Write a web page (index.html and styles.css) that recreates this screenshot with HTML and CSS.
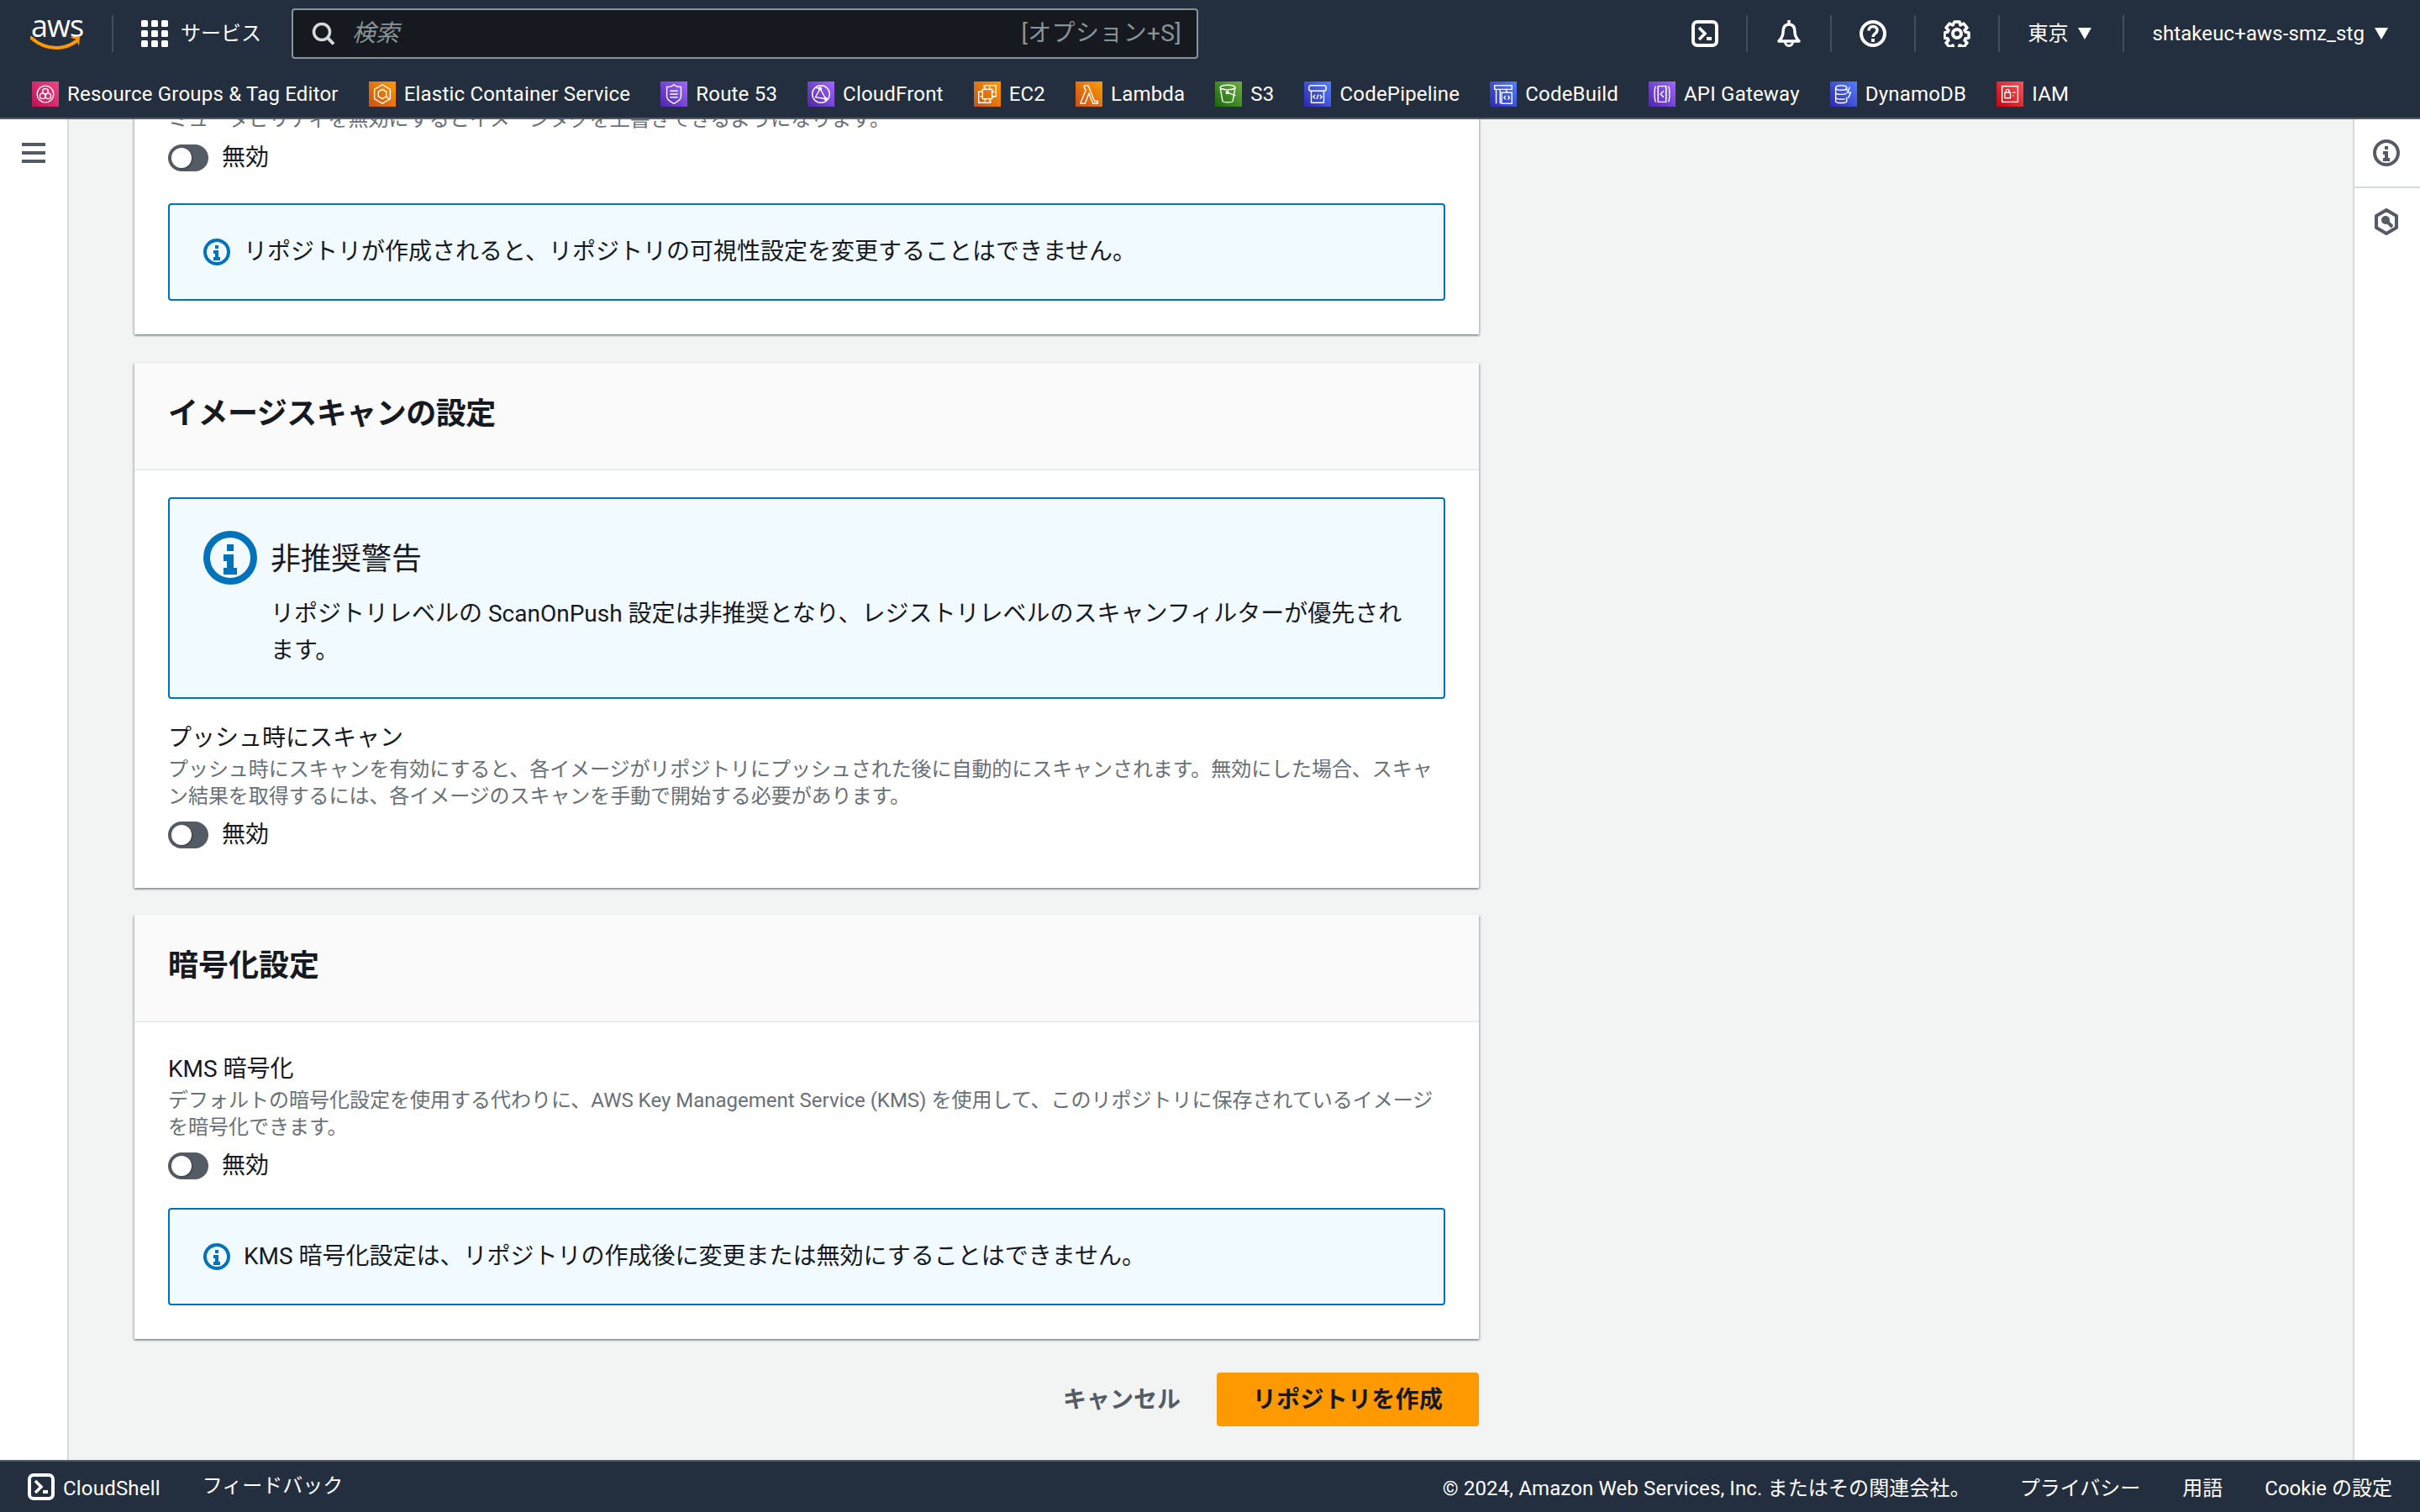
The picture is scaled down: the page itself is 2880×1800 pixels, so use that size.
FILE: index.html
```html
<!DOCTYPE html>
<html lang="ja">
<head>
<meta charset="utf-8">
<title>リポジトリを作成</title>
<link rel="stylesheet" href="styles.css">
</head>
<body>
<div class="app">
  <header class="nav">
    <div class="nav-top">
      <div class="logo">
        <span class="logo-text">aws</span>
        <svg class="logo-smile" viewBox="0 0 62 18"><path d="M1 3c9 8 19 12 30 12 9 0 17-3 24-8" fill="none" stroke="#f90" stroke-width="4" stroke-linecap="round"/><path d="M47 2.500l12-1.500-1 12-3-8z" fill="#f90"/></svg>
      </div>
      <span class="nav-sep"></span>
      <svg class="ico grid-ico" viewBox="0 0 32 32"><g fill="#fff"><rect x="0" y="0" width="8" height="8" rx="1.500"/><rect x="12" y="0" width="8" height="8" rx="1.500"/><rect x="24" y="0" width="8" height="8" rx="1.500"/><rect x="0" y="12" width="8" height="8" rx="1.500"/><rect x="12" y="12" width="8" height="8" rx="1.500"/><rect x="24" y="12" width="8" height="8" rx="1.500"/><rect x="0" y="24" width="8" height="8" rx="1.500"/><rect x="12" y="24" width="8" height="8" rx="1.500"/><rect x="24" y="24" width="8" height="8" rx="1.500"/></g></svg>
      <span class="services">サービス</span>
      <div class="search">
        <svg class="search-ico" viewBox="0 0 28 28"><circle cx="12" cy="12" r="9.500" fill="none" stroke="#d5dbdb" stroke-width="3.500"/><path d="M19 19l7 7.500" stroke="#d5dbdb" stroke-width="4" fill="none"/></svg>
        <span class="search-ph">検索</span>
        <span class="search-key">[オプション+S]</span>
      </div>
      <div class="nav-right">
        <div class="nav-item">
          <svg class="ico" viewBox="0 0 32 32"><rect x="2" y="2" width="28" height="28" rx="5" fill="none" stroke="#fff" stroke-width="4"/><path d="M9 9l7 7-7 7" fill="none" stroke="#fff" stroke-width="3.500"/><path d="M18 22h6" stroke="#fff" stroke-width="4"/></svg>
        </div>
        <div class="nav-item">
          <svg class="ico" viewBox="0 0 32 32"><path d="M16 0v5" stroke="#fff" stroke-width="3.500"/><path d="M16 5c-5 0-7 4-7 9 0 5-2 8-5 11h24c-3-3-5-6-5-11 0-5-2-9-7-9z" fill="none" stroke="#fff" stroke-width="3.500" stroke-linejoin="round"/><path d="M11.500 26a4.500 4.500 0 0 0 9 0" fill="none" stroke="#fff" stroke-width="3"/></svg>
        </div>
        <div class="nav-item">
          <svg class="ico" viewBox="0 0 32 32"><circle cx="16" cy="16" r="14" fill="none" stroke="#fff" stroke-width="4"/><path d="M11 12.500c0-3 2-5 5-5s5 2 5 4.500c0 4-5 4-5 8" fill="none" stroke="#fff" stroke-width="3.500"/><rect x="14" y="22" width="4" height="4" fill="#fff"/></svg>
        </div>
        <div class="nav-item">
          <svg class="ico" viewBox="0 0 32 32"><path d="M13 2h6l1 4 4-2 4 5-3 3 1 2 4 1v6l-4 1-1 2 3 3-4 5-4-2-1 0-1 4h-6l-1-4-4 2-4-5 3-3-1-2-4-1v-6l4-1 1-2-3-3 4-5 4 2z" fill="none" stroke="#fff" stroke-width="3.500" stroke-linejoin="round"/><circle cx="16" cy="16" r="5" fill="none" stroke="#fff" stroke-width="4"/></svg>
        </div>
        <div class="nav-item nav-text nav-region">東京<span class="caret"></span></div>
        <div class="nav-item nav-text nav-last">shtakeuc+aws-smz_stg<span class="caret"></span></div>
      </div>
    </div>
    <nav class="bookmarks">
      <a class="bm"><span class="svc svc-pink"><svg viewBox="0 0 32 32"><g fill="none" stroke="#fff" stroke-width="1.500"><circle cx="16" cy="16" r="10.500"/><circle cx="16" cy="12.500" r="3.500"/><circle cx="12.500" cy="18.500" r="3.500"/><circle cx="19.500" cy="18.500" r="3.500"/></g></svg></span>Resource Groups &amp; Tag Editor</a>
      <a class="bm"><span class="svc svc-orange"><svg viewBox="0 0 32 32"><g fill="none" stroke="#fff" stroke-width="1.500"><path d="M16 4l10 6v12l-10 6-10-6V10z"/><path d="M16 10l5 3v6l-5 3-5-3v-6zM21 19l4 4"/></g></svg></span>Elastic Container Service</a>
      <a class="bm"><span class="svc svc-purple"><svg viewBox="0 0 32 32"><g fill="none" stroke="#fff" stroke-width="1.500"><path d="M16 4c3 3 6 3 9 3v12c0 5-5 7-9 9-4-2-9-4-9-9V7c3 0 6 0 9-3z"/><path d="M11 12h10M11 16h10M11 20h10"/></g></svg></span>Route 53</a>
      <a class="bm"><span class="svc svc-purple"><svg viewBox="0 0 32 32"><g fill="none" stroke="#fff" stroke-width="1.500"><circle cx="16" cy="16" r="11"/><path d="M9 20l6-11 7 13zM9 20l13 2M15 9l-5-1"/><circle cx="15" cy="9" r="1.500" fill="#fff"/><circle cx="22" cy="22" r="1.500" fill="#fff"/></g></svg></span>CloudFront</a>
      <a class="bm"><span class="svc svc-orange"><svg viewBox="0 0 32 32"><g fill="none" stroke="#fff" stroke-width="1.500"><path d="M12 8V5h15v14h-4M20 24v3H5V13h4"/><rect x="10" y="10" width="12" height="12"/><path d="M13 7v3M19 7v3M13 22v3M19 22v3M7 13h3M7 19h3M22 13h3M22 19h3"/></g></svg></span>EC2</a>
      <a class="bm"><span class="svc svc-orange"><svg viewBox="0 0 32 32"><path d="M10 5h5l8 20h4v3h-6l-5-13-5 13H5l7-17-2-3z" fill="none" stroke="#fff" stroke-width="1.500" stroke-linejoin="round"/></svg></span>Lambda</a>
      <a class="bm"><span class="svc svc-green"><svg viewBox="0 0 32 32"><g fill="none" stroke="#fff" stroke-width="1.500"><ellipse cx="15" cy="7.500" rx="9.500" ry="3"/><path d="M5.500 8l3 17c.5 2 12.500 2 13 0l3-17"/><path d="M15 14l10 4"/><circle cx="14.500" cy="14" r="1.500" fill="#fff"/></g></svg></span>S3</a>
      <a class="bm"><span class="svc svc-blue"><svg viewBox="0 0 32 32"><g fill="none" stroke="#fff" stroke-width="1.500"><rect x="5" y="5" width="22" height="7" rx="3"/><path d="M8 12v15h16V12"/><path d="M13 17l-2.500 2.500L13 22M19 17l2.500 2.500L19 22M17 16.500l-2 6"/></g></svg></span>CodePipeline</a>
      <a class="bm"><span class="svc svc-blue"><svg viewBox="0 0 32 32"><g fill="none" stroke="#fff" stroke-width="1.500"><path d="M5 5h22v5H5zM7 10v18M12 10v18M20 10v4"/><rect x="14" y="14" width="13" height="14"/><path d="M19 18l-2 2.500 2 2.500M22 18l2 2.500-2 2.500"/></g></svg></span>CodeBuild</a>
      <a class="bm"><span class="svc svc-purple"><svg viewBox="0 0 32 32"><g fill="none" stroke="#fff" stroke-width="1.500"><path d="M8 6c-2 3-2 17 0 20M24 6c2 3 2 17 0 20M11 6h10v20H11z"/><path d="M18 12l-4 4 4 4"/><path d="M11 9h-1M11 13h-1M11 17h-1M11 21h-1M22 9h-1M22 13h-1M22 17h-1M22 21h-1"/></g></svg></span>API Gateway</a>
      <a class="bm"><span class="svc svc-blue"><svg viewBox="0 0 32 32"><g fill="none" stroke="#fff" stroke-width="1.500"><ellipse cx="13" cy="8" rx="7" ry="3"/><path d="M6 8v17c0 3 14 3 14 0v-5M6 14c0 3 10 3 14 1M6 20c0 3 8 3 12 2M20 8v4"/><path d="M24 7l-3 7h4l-3 7"/></g></svg></span>DynamoDB</a>
      <a class="bm"><span class="svc svc-red"><svg viewBox="0 0 32 32"><g fill="none" stroke="#fff" stroke-width="1.500"><rect x="6" y="6" width="20" height="20"/><rect x="9.500" y="14" width="7" height="7"/><path d="M11 14v-2a2 2 0 0 1 4 0v2M19 14h4M19 18h2"/></g></svg></span>IAM</a>
    </nav>
  </header>

  <div class="workspace">
    <aside class="side-left">
      <svg class="menu-ico" viewBox="0 0 28 24"><path d="M0 2h28M0 12h28M0 22h28" stroke="#545b64" stroke-width="4"/></svg>
    </aside>

    <main class="content">
      <section class="card card-scrolled">
        <div class="card-body body-clipped">
          <p class="desc">ミュータビリティを無効にするとイメージタグを上書きできるようになります。</p>
          <div class="toggle-row"><span class="toggle"><span class="knob"></span></span>無効</div>
          <div class="alert alert-first"><svg class="info" viewBox="0 0 16 16"><use href="#i-info"/></svg><span>リポジトリが作成されると、リポジトリの可視性設定を変更することはできません。</span></div>
        </div>
      </section>

      <section class="card">
        <h2 class="card-head head-kana">イメージスキャンの設定</h2>
        <div class="card-body body-scan">
          <div class="alert-big">
            <div class="alert-big-top">
              <svg class="info-big" viewBox="0 0 16 16"><use href="#i-info"/></svg>
              <span class="alert-title">非推奨警告</span>
            </div>
            <p class="alert-big-text">リポジトリレベルの ScanOnPush 設定は非推奨となり、レジストリレベルのスキャンフィルターが優先され<br>ます。</p>
          </div>
          <div class="label label-scan">プッシュ時にスキャン</div>
          <p class="desc desc-under desc-tight">プッシュ時にスキャンを有効にすると、各イメージがリポジトリにプッシュされた後に自動的にスキャンされます。無効にした場合、スキャ<br>ン結果を取得するには、各イメージのスキャンを手動で開始する必要があります。</p>
          <div class="toggle-row"><span class="toggle"><span class="knob"></span></span>無効</div>
        </div>
      </section>

      <section class="card">
        <h2 class="card-head">暗号化設定</h2>
        <div class="card-body body-kms">
          <div class="label">KMS 暗号化</div>
          <p class="desc desc-under">デフォルトの暗号化設定を使用する代わりに、AWS Key Management Service (KMS) を使用して、このリポジトリに保存されているイメージ<br>を暗号化できます。</p>
          <div class="toggle-row"><span class="toggle"><span class="knob"></span></span>無効</div>
          <div class="alert alert-kms"><svg class="info" viewBox="0 0 16 16"><use href="#i-info"/></svg><span>KMS 暗号化設定は、リポジトリの作成後に変更または無効にすることはできません。</span></div>
        </div>
      </section>

      <div class="actions">
        <a class="btn-cancel">キャンセル</a>
        <a class="btn-primary">リポジトリを作成</a>
      </div>
    </main>

    <aside class="side-right">
      <div class="rail-slot rail-first">
        <svg class="ico" viewBox="0 0 16 16"><use href="#i-info-gray"/></svg>
      </div>
      <div class="rail-slot">
        <svg class="ico" viewBox="0 0 32 32"><path d="M16 2l12 7v14l-12 7-12-7V9z" fill="none" stroke="#545b64" stroke-width="4" stroke-linejoin="round"/><circle cx="15" cy="14" r="5" fill="#545b64"/><path d="M17 16l6 6" stroke="#545b64" stroke-width="4"/></svg>
      </div>
    </aside>
  </div>

  <footer class="foot">
    <svg class="ico" viewBox="0 0 32 32"><rect x="2" y="2" width="28" height="28" rx="5" fill="none" stroke="#fff" stroke-width="4"/><path d="M9 9l7 7-7 7" fill="none" stroke="#fff" stroke-width="3.500"/><path d="M18 22h6" stroke="#fff" stroke-width="4"/></svg>
    <span class="foot-shell">CloudShell</span>
    <span class="foot-feedback">フィードバック</span>
    <span class="foot-copy">© 2024, Amazon Web Services, Inc. またはその関連会社。</span>
    <span class="foot-link">プライバシー</span>
    <span class="foot-link">用語</span>
    <span class="foot-link">Cookie の設定</span>
  </footer>
</div>

<svg class="defs" width="0" height="0">
  <defs>
    <g id="i-info"><circle cx="8" cy="8" r="7" fill="none" stroke="#0073bb" stroke-width="2"/><path fill="#0073bb" d="M7 4h2v2H7zM6 7h3v4h1v2H6v-2h1V9H6z"/></g>
    <g id="i-info-gray"><circle cx="8" cy="8" r="7" fill="none" stroke="#545b64" stroke-width="2"/><path fill="#545b64" d="M7 4h2v2H7zM6 7h3v4h1v2H6v-2h1V9H6z"/></g>
  </defs>
</svg>
</body>
</html>
```
FILE: styles.css
```css
* { box-sizing: border-box; }
html, body { margin: 0; padding: 0; height: 100%; }
body {
  font-family: Roboto, "Noto Sans CJK JP", sans-serif;
  font-size: 28px;
  line-height: 40px;
  color: #16191f;
  background: #f2f3f3;
}
.defs { position: absolute; }
.app { display: flex; flex-direction: column; height: 1800px; width: 2880px; overflow: hidden; }
.ico { width: 32px; height: 32px; display: block; flex: none; }

/* top navigation */
.nav { flex: none; height: 142px; background: #232f3e; border-bottom: 2px solid #545b64; color: #fff; }
.nav-top { display: flex; align-items: center; height: 80px; padding-left: 36px; font-size: 24px; }
.logo { position: relative; width: 62px; height: 44px; margin-right: 35px; flex: none; }
.logo-text { position: absolute; left: 1px; top: -7px; font-family: "Open Sans", sans-serif; font-size: 36px; line-height: 40px; letter-spacing: -1px; color: #fff; }
.logo-smile { position: absolute; left: 0; top: 24px; width: 62px; height: 18px; }
.nav-sep { width: 2px; height: 44px; background: #414d5c; margin-right: 33px; flex: none; }
.grid-ico { margin-right: 15px; }
.services { width: 96px; flex: none; margin-right: 36px; white-space: nowrap; }
.search { display: flex; align-items: center; width: 1079px; height: 60px; background: #16191f; border: 2px solid #879596; border-radius: 4px; padding: 0 18px 0 22px; color: #879596; font-size: 28px; flex: none; }
.search-ico { width: 28px; height: 28px; margin-right: 20px; flex: none; }
.search-ph { font-style: italic; }
.search-key { margin-left: auto; letter-spacing: .35px; }
.nav-right { display: flex; align-items: center; margin-left: auto; padding-right: 38px; }
.nav-item { display: flex; align-items: center; height: 44px; padding: 0 33px; border-right: 2px solid #414d5c; white-space: nowrap; }
.nav-text { line-height: 44px; }
.nav-region { padding-right: 37px; }
.nav-last { border-right: 0; padding-right: 0; letter-spacing: .1px; }
.caret { width: 0; height: 0; margin-left: 12px; border-left: 8px solid transparent; border-right: 8px solid transparent; border-top: 14px solid #fff; }
.bookmarks { display: flex; align-items: center; height: 60px; padding: 4px 0 0 38px; gap: 36px; font-size: 24px; letter-spacing: .2px; }
.bm { display: flex; align-items: center; gap: 10px; white-space: nowrap; color: #fff; }
.svc { display: block; width: 32px; height: 30px; flex: none; }
.svc svg { display: block; width: 32px; height: 30px; }
.svc-pink { background: linear-gradient(45deg, #bc1356, #f34482); }
.svc-orange { background: linear-gradient(45deg, #c8511b, #f90); }
.svc-purple { background: linear-gradient(45deg, #4d27a8, #a166ff); }
.svc-green { background: linear-gradient(45deg, #1b660f, #6cae3e); }
.svc-blue { background: linear-gradient(45deg, #2e27ad, #527fff); }
.svc-red { background: linear-gradient(45deg, #bd0816, #ff5252); }

/* workspace */
.workspace { flex: 1; display: flex; min-height: 0; }
.side-left { flex: none; width: 82px; background: #fff; border-right: 2px solid #d5dbdb; padding: 28px 0 0 26px; }
.menu-ico { display: block; width: 28px; height: 24px; }
.content { flex: 1; overflow: hidden; padding: 0 0 0 78px; min-width: 0; }
.side-right { flex: none; width: 80px; background: #fff; border-left: 2px solid #d5dbdb; }
.rail-slot { padding: 24px 0 0 22px; }
.rail-first { height: 82px; border-bottom: 2px solid #d5dbdb; }

/* cards */
.card { width: 1600px; background: #fff; margin-bottom: 32px; box-shadow: 0 -1px 0 #eaeded, 0 2px 2px rgba(0, 28, 36, .3), 2px 1px 2px rgba(0, 28, 36, .15), -2px 1px 2px rgba(0, 28, 36, .15); }
.card-scrolled { margin-top: -16px; margin-bottom: 34px; }
.card-head { margin: 0; height: 128px; padding: 0 40px 4px; display: flex; align-items: center; background: #fafafa; border-bottom: 2px solid #eaeded; font-size: 36px; font-weight: 700; line-height: 48px; }
.head-kana { letter-spacing: -.5px; }
.card-body { padding: 32px 40px 47px; }
.body-clipped { padding: 0 40px 40px; }
.body-kms { padding: 36px 40px 40px; }
.desc { margin: 0; font-size: 24px; line-height: 32px; color: #687078; }
.desc-under { margin-top: 1px; }
.desc-tight { letter-spacing: -.06px; }
.label { line-height: 40px; }
.label-scan { margin-top: 27px; }
.toggle-row { display: flex; align-items: center; gap: 16px; height: 32px; margin-top: 14px; line-height: 32px; }
.toggle { display: block; width: 48px; height: 32px; border-radius: 16px; background: #545b64; padding: 4px; }
.knob { display: block; width: 24px; height: 24px; border-radius: 50%; background: #fff; box-shadow: 1px 1px 2px rgba(0, 0, 0, .35); }

/* alerts */
.alert { display: flex; align-items: center; height: 116px; padding: 0 40px; border: 2px solid #0073bb; border-radius: 4px; background: #f1faff; }
.alert-first { margin-top: 38px; }
.alert-kms { margin-top: 34px; }
.info { width: 32px; height: 32px; margin-right: 16px; flex: none; }
.alert-big { height: 240px; padding: 38px 40px 0; border: 2px solid #0073bb; border-radius: 4px; background: #f1faff; }
.alert-big-top { display: flex; align-items: center; gap: 16px; }
.info-big { width: 64px; height: 64px; flex: none; }
.alert-title { font-size: 36px; line-height: 48px; margin-top: 4px; }
.alert-big-text { margin: 13px 0 0 80px; line-height: 44px; }

/* actions */
.actions { display: flex; align-items: center; justify-content: flex-end; width: 1600px; margin-top: 40px; font-weight: 700; }
.btn-cancel { color: #545b64; margin: 2px 43px 0 0; }
.btn-primary { display: flex; align-items: center; justify-content: center; width: 312px; height: 64px; padding-top: 2px; background: #f90; border-radius: 4px; color: #16191f; letter-spacing: .3px; }

/* footer */
.foot { flex: none; display: flex; align-items: center; height: 62px; background: #232f3e; border-top: 2px solid #545b64; color: #fff; font-size: 24px; padding: 0 33px; }
.foot span { margin-top: 3px; }
.foot .foot-shell { margin-left: 10px; letter-spacing: .2px; }
.foot .foot-feedback { margin-left: 50px; margin-top: -2px; }
.foot .foot-copy { margin-left: auto; margin-right: 9px; letter-spacing: .12px; }
.foot-link { margin-left: 50px; }
```
